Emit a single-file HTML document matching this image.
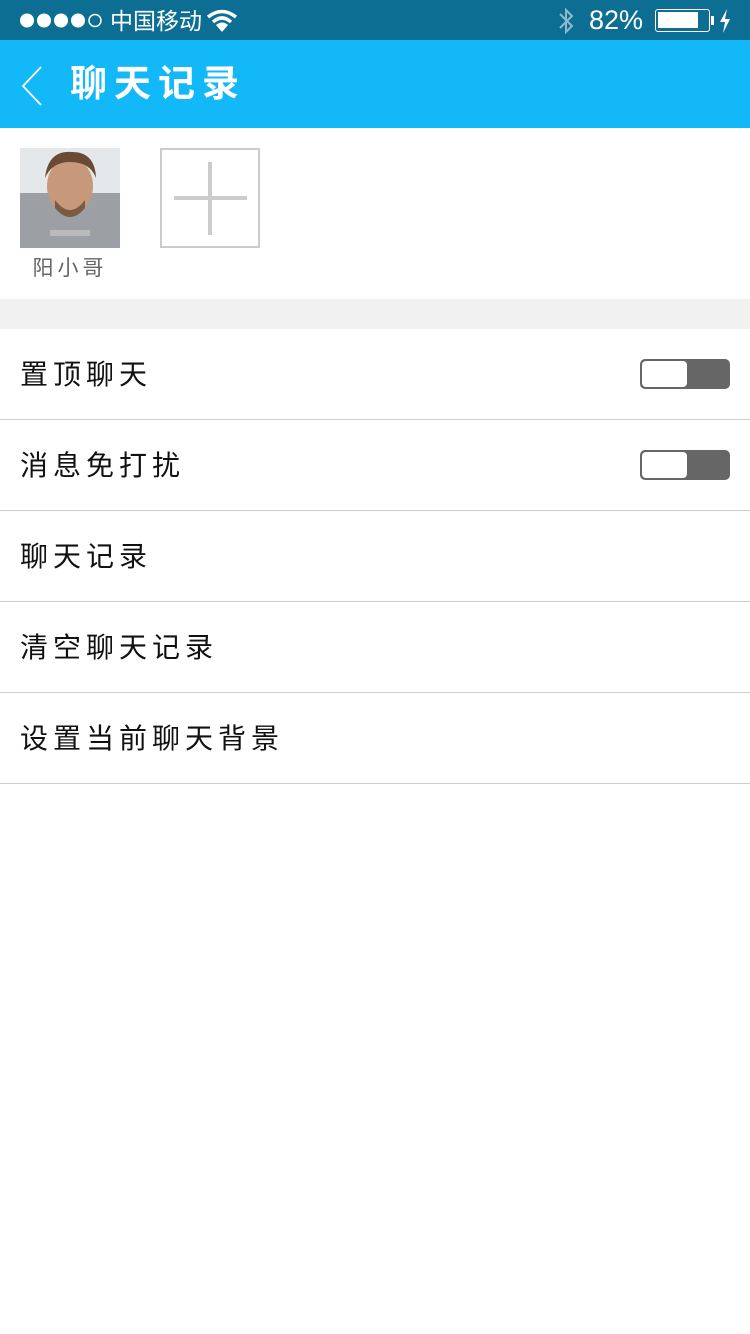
<!DOCTYPE html>
<html><head><meta charset="utf-8"><style>
*{margin:0;padding:0;box-sizing:border-box}
body{width:750px;height:1334px;background:#fff;font-family:"Liberation Sans","Noto Sans CJK SC",sans-serif;position:relative;overflow:hidden}
.sb{position:absolute;top:0;left:0;width:750px;height:40px;background:#0d6e94;color:#fff}
.nav{position:absolute;top:40px;left:0;width:750px;height:88px;background:#12b8f7}
.row{position:absolute;left:0;width:750px;height:91px;border-bottom:1px solid #ccc;font-size:28px;letter-spacing:5px;color:#111;padding-left:20px;line-height:91px}
.tg{position:absolute;left:640px;width:90px;height:30px;border-radius:5px;background:#666}
.tg i{position:absolute;left:2px;top:2px;width:45px;height:26px;background:#fff;border-radius:4px}
</style></head><body>
<div class="sb">
<svg style="position:absolute;left:19px;top:12px" width="86" height="18" viewBox="0 0 86 18"><circle cx="8" cy="8.5" r="7" fill="#fff"/><circle cx="25" cy="8.5" r="7" fill="#fff"/><circle cx="42" cy="8.5" r="7" fill="#fff"/><circle cx="59" cy="8.5" r="7" fill="#fff"/><circle cx="76" cy="8.5" r="6" fill="none" stroke="#fff" stroke-width="1.5"/></svg>
<div style="position:absolute;left:110px;top:6px;font-size:23px;line-height:30px">中国移动</div>
<svg style="position:absolute;left:206px;top:9px" width="32" height="24" viewBox="0 0 32 24"><path d="M2 8 Q16 -3 30 8" stroke="#fff" stroke-width="3.5" fill="none"/><path d="M7 13 Q16 5 25 13" stroke="#fff" stroke-width="3.5" fill="none"/><path d="M10 16 Q16 11 22 16 L16 23Z" fill="#fff"/></svg>
<svg style="position:absolute;left:558px;top:7px" width="16" height="28" viewBox="0 0 16 28"><path d="M2 7 L14 19 L8 25 L8 3 L14 9 L2 21" stroke="#8fb9cc" stroke-width="2" fill="none"/></svg>
<div style="position:absolute;left:589px;top:5px;font-size:27px;line-height:30px">82%</div>
<div style="position:absolute;left:655px;top:9px;width:55px;height:23px;border:1.5px solid #fff;border-radius:3px"><div style="margin:2px;width:40px;height:16px;background:#fff"></div></div>
<div style="position:absolute;left:711px;top:16px;width:3px;height:9px;background:#fff"></div>
<svg style="position:absolute;left:718px;top:9px" width="14" height="24" viewBox="0 0 14 24"><path d="M9 0 L2 13 L7 13 L5 24 L12 10 L7 10Z" fill="#fff"/></svg>
</div>
<div class="nav">
<svg style="position:absolute;left:20px;top:26px" width="24" height="40" viewBox="0 0 24 40"><path d="M21 1 L3 20 L21 39" stroke="#fff" stroke-width="1.8" fill="none"/></svg>
<div style="position:absolute;left:70px;top:22px;font-size:37px;line-height:44px;color:#fff;letter-spacing:7px;font-weight:bold">聊天记录</div>
</div>
<svg style="position:absolute;left:20px;top:148px" width="100" height="100" viewBox="0 0 100 100">
<rect width="100" height="100" fill="#e4e8ea"/><rect y="45" width="100" height="55" fill="#9c9fa3"/>
<ellipse cx="50" cy="38" rx="23" ry="28" fill="#c8987a"/><path d="M25 30 Q28 2 52 4 Q75 4 76 30 Q70 14 50 14 Q32 14 25 30Z" fill="#6a4a32"/>
<path d="M35 52 Q50 72 65 52 L65 60 Q50 78 35 60Z" fill="#7a5a40"/><rect x="30" y="82" width="40" height="6" fill="#bbb"/></svg>
<div style="position:absolute;left:160px;top:148px;width:100px;height:100px;border:2px solid #ccc"></div>
<div style="position:absolute;left:174px;top:196px;width:73px;height:4px;background:#ccc"></div>
<div style="position:absolute;left:208px;top:162px;width:4px;height:73px;background:#ccc"></div>
<div style="position:absolute;left:20px;top:254px;width:100px;text-align:center;font-size:21px;color:#666;letter-spacing:4px;line-height:30px">阳小哥</div>
<div style="position:absolute;top:299px;left:0;width:750px;height:30px;background:#f1f1f1"></div>
<div class="row" style="top:329px">置顶聊天</div>
<div class="tg" style="top:359px"><i></i></div>
<div class="row" style="top:420px">消息免打扰</div>
<div class="tg" style="top:450px"><i></i></div>
<div class="row" style="top:511px">聊天记录</div>
<div class="row" style="top:602px">清空聊天记录</div>
<div class="row" style="top:693px">设置当前聊天背景</div>
</body></html>
